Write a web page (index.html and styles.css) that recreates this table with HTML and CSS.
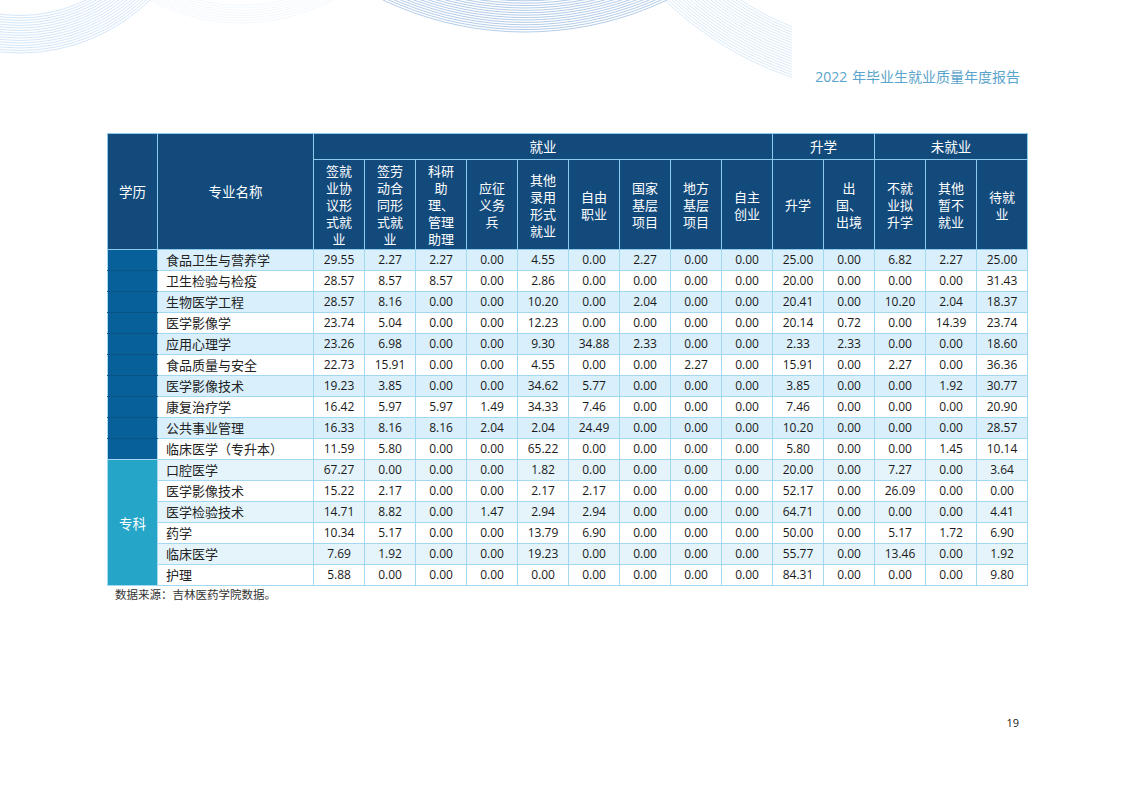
FILE: index.html
```html
<!DOCTYPE html>
<html lang="zh-CN">
<head>
<meta charset="utf-8">
<title>2022 年毕业生就业质量年度报告</title>
<link rel="stylesheet" href="styles.css">
</head>
<body>
<div class="page">
  <svg class="deco" width="1122" height="100" viewBox="0 0 1122 100" aria-hidden="true">
    <defs>
      <clipPath id="clipD"><rect x="0" y="0" width="792" height="100"/></clipPath>
    </defs>
    <g class="bA" fill="none">
      <circle cx="20" cy="-133" r="186"/><circle cx="20" cy="-133" r="183.5"/><circle cx="20" cy="-133" r="181"/><circle cx="20" cy="-133" r="178.5"/>
      <circle cx="20" cy="-133" r="176"/><circle cx="20" cy="-133" r="173.5"/><circle cx="20" cy="-133" r="171"/><circle cx="20" cy="-133" r="168.5"/>
      <circle cx="20" cy="-133" r="166"/><circle cx="20" cy="-133" r="163.5"/><circle cx="20" cy="-133" r="161"/><circle cx="20" cy="-133" r="158.5"/>
      <circle cx="20" cy="-133" r="156"/><circle cx="20" cy="-133" r="153.5"/><circle cx="20" cy="-133" r="151"/><circle cx="20" cy="-133" r="148.5"/>
    </g>
    <g class="bB" fill="none">
      <circle cx="241" cy="-170.5" r="193.5"/><circle cx="241" cy="-170.5" r="191"/><circle cx="241" cy="-170.5" r="188.5"/><circle cx="241" cy="-170.5" r="186"/>
      <circle cx="241" cy="-170.5" r="183.5"/><circle cx="241" cy="-170.5" r="181"/><circle cx="241" cy="-170.5" r="178.5"/><circle cx="241" cy="-170.5" r="176"/>
    </g>
    <g class="bC" fill="none">
      <circle cx="525" cy="-299" r="331"/><circle cx="525" cy="-299" r="328.6"/><circle cx="525" cy="-299" r="326.2"/><circle cx="525" cy="-299" r="323.8"/>
      <circle cx="525" cy="-299" r="321.4"/><circle cx="525" cy="-299" r="319"/><circle cx="525" cy="-299" r="316.6"/><circle cx="525" cy="-299" r="314.2"/>
      <circle cx="525" cy="-299" r="311.8"/><circle cx="525" cy="-299" r="309.4"/><circle cx="525" cy="-299" r="307"/><circle cx="525" cy="-299" r="304.6"/>
      <circle cx="525" cy="-299" r="302.2"/><circle cx="525" cy="-299" r="299.8"/>
    </g>
    <g class="bD" fill="none" clip-path="url(#clipD)">
      <circle cx="900" cy="-244" r="339"/><circle cx="900" cy="-244" r="336.5"/><circle cx="900" cy="-244" r="334"/><circle cx="900" cy="-244" r="331.5"/>
      <circle cx="900" cy="-244" r="329"/><circle cx="900" cy="-244" r="326.5"/><circle cx="900" cy="-244" r="324"/><circle cx="900" cy="-244" r="321.5"/>
      <circle cx="900" cy="-244" r="319"/><circle cx="900" cy="-244" r="316.5"/><circle cx="900" cy="-244" r="314"/><circle cx="900" cy="-244" r="311.5"/>
      <circle cx="900" cy="-244" r="309"/><circle cx="900" cy="-244" r="306.5"/><circle cx="900" cy="-244" r="304"/><circle cx="900" cy="-244" r="301.5"/>
      <circle cx="900" cy="-244" r="299"/><circle cx="900" cy="-244" r="296.5"/><circle cx="900" cy="-244" r="294"/><circle cx="900" cy="-244" r="291.5"/>
    </g>
  </svg>

  <header class="report-title">2022 年毕业生就业质量年度报告</header>

  <main class="content">
    <table class="data">
      <colgroup>
        <col class="c-edu"><col class="c-name">
        <col class="c-num"><col class="c-num"><col class="c-num"><col class="c-num"><col class="c-num"><col class="c-num"><col class="c-num">
        <col class="c-num"><col class="c-num"><col class="c-num"><col class="c-num"><col class="c-num"><col class="c-num"><col class="c-num">
      </colgroup>
      <thead>
        <tr class="h1">
          <th rowspan="2">学历</th>
          <th rowspan="2">专业名称</th>
          <th colspan="9">就业</th>
          <th colspan="2">升学</th>
          <th colspan="3">未就业</th>
        </tr>
        <tr class="h2">
          <th>签就业协议形式就业</th>
          <th>签劳动合同形式就业</th>
          <th>科研助理、管理助理</th>
          <th>应征义务兵</th>
          <th>其他录用形式就业</th>
          <th>自由职业</th>
          <th>国家基层项目</th>
          <th>地方基层项目</th>
          <th>自主创业</th>
          <th>升学</th>
          <th>出国、出境</th>
          <th>不就业拟升学</th>
          <th>其他暂不就业</th>
          <th>待就业</th>
        </tr>
      </thead>
      <tbody>
        <tr class="bk-row alt"><td class="bk"></td><td class="name">食品卫生与营养学</td><td>29.55</td><td>2.27</td><td>2.27</td><td>0.00</td><td>4.55</td><td>0.00</td><td>2.27</td><td>0.00</td><td>0.00</td><td>25.00</td><td>0.00</td><td>6.82</td><td>2.27</td><td>25.00</td></tr>
        <tr class="bk-row"><td class="bk"></td><td class="name">卫生检验与检疫</td><td>28.57</td><td>8.57</td><td>8.57</td><td>0.00</td><td>2.86</td><td>0.00</td><td>0.00</td><td>0.00</td><td>0.00</td><td>20.00</td><td>0.00</td><td>0.00</td><td>0.00</td><td>31.43</td></tr>
        <tr class="bk-row alt"><td class="bk"></td><td class="name">生物医学工程</td><td>28.57</td><td>8.16</td><td>0.00</td><td>0.00</td><td>10.20</td><td>0.00</td><td>2.04</td><td>0.00</td><td>0.00</td><td>20.41</td><td>0.00</td><td>10.20</td><td>2.04</td><td>18.37</td></tr>
        <tr class="bk-row"><td class="bk"></td><td class="name">医学影像学</td><td>23.74</td><td>5.04</td><td>0.00</td><td>0.00</td><td>12.23</td><td>0.00</td><td>0.00</td><td>0.00</td><td>0.00</td><td>20.14</td><td>0.72</td><td>0.00</td><td>14.39</td><td>23.74</td></tr>
        <tr class="bk-row alt"><td class="bk"></td><td class="name">应用心理学</td><td>23.26</td><td>6.98</td><td>0.00</td><td>0.00</td><td>9.30</td><td>34.88</td><td>2.33</td><td>0.00</td><td>0.00</td><td>2.33</td><td>2.33</td><td>0.00</td><td>0.00</td><td>18.60</td></tr>
        <tr class="bk-row"><td class="bk"></td><td class="name">食品质量与安全</td><td>22.73</td><td>15.91</td><td>0.00</td><td>0.00</td><td>4.55</td><td>0.00</td><td>0.00</td><td>2.27</td><td>0.00</td><td>15.91</td><td>0.00</td><td>2.27</td><td>0.00</td><td>36.36</td></tr>
        <tr class="bk-row alt"><td class="bk"></td><td class="name">医学影像技术</td><td>19.23</td><td>3.85</td><td>0.00</td><td>0.00</td><td>34.62</td><td>5.77</td><td>0.00</td><td>0.00</td><td>0.00</td><td>3.85</td><td>0.00</td><td>0.00</td><td>1.92</td><td>30.77</td></tr>
        <tr class="bk-row"><td class="bk"></td><td class="name">康复治疗学</td><td>16.42</td><td>5.97</td><td>5.97</td><td>1.49</td><td>34.33</td><td>7.46</td><td>0.00</td><td>0.00</td><td>0.00</td><td>7.46</td><td>0.00</td><td>0.00</td><td>0.00</td><td>20.90</td></tr>
        <tr class="bk-row alt"><td class="bk"></td><td class="name">公共事业管理</td><td>16.33</td><td>8.16</td><td>8.16</td><td>2.04</td><td>2.04</td><td>24.49</td><td>0.00</td><td>0.00</td><td>0.00</td><td>10.20</td><td>0.00</td><td>0.00</td><td>0.00</td><td>28.57</td></tr>
        <tr class="bk-row"><td class="bk bk-last"></td><td class="name">临床医学（专升本）</td><td>11.59</td><td>5.80</td><td>0.00</td><td>0.00</td><td>65.22</td><td>0.00</td><td>0.00</td><td>0.00</td><td>0.00</td><td>5.80</td><td>0.00</td><td>0.00</td><td>1.45</td><td>10.14</td></tr>
        <tr class="zk-row alt"><td class="zk" rowspan="6">专科</td><td class="name">口腔医学</td><td>67.27</td><td>0.00</td><td>0.00</td><td>0.00</td><td>1.82</td><td>0.00</td><td>0.00</td><td>0.00</td><td>0.00</td><td>20.00</td><td>0.00</td><td>7.27</td><td>0.00</td><td>3.64</td></tr>
        <tr class="zk-row"><td class="name">医学影像技术</td><td>15.22</td><td>2.17</td><td>0.00</td><td>0.00</td><td>2.17</td><td>2.17</td><td>0.00</td><td>0.00</td><td>0.00</td><td>52.17</td><td>0.00</td><td>26.09</td><td>0.00</td><td>0.00</td></tr>
        <tr class="zk-row alt"><td class="name">医学检验技术</td><td>14.71</td><td>8.82</td><td>0.00</td><td>1.47</td><td>2.94</td><td>2.94</td><td>0.00</td><td>0.00</td><td>0.00</td><td>64.71</td><td>0.00</td><td>0.00</td><td>0.00</td><td>4.41</td></tr>
        <tr class="zk-row"><td class="name">药学</td><td>10.34</td><td>5.17</td><td>0.00</td><td>0.00</td><td>13.79</td><td>6.90</td><td>0.00</td><td>0.00</td><td>0.00</td><td>50.00</td><td>0.00</td><td>5.17</td><td>1.72</td><td>6.90</td></tr>
        <tr class="zk-row alt"><td class="name">临床医学</td><td>7.69</td><td>1.92</td><td>0.00</td><td>0.00</td><td>19.23</td><td>0.00</td><td>0.00</td><td>0.00</td><td>0.00</td><td>55.77</td><td>0.00</td><td>13.46</td><td>0.00</td><td>1.92</td></tr>
        <tr class="zk-row"><td class="name">护理</td><td>5.88</td><td>0.00</td><td>0.00</td><td>0.00</td><td>0.00</td><td>0.00</td><td>0.00</td><td>0.00</td><td>0.00</td><td>84.31</td><td>0.00</td><td>0.00</td><td>0.00</td><td>9.80</td></tr>
      </tbody>
    </table>
    <p class="source">数据来源：吉林医药学院数据。</p>
  </main>

  <footer class="page-no">19</footer>
</div>
</body>
</html>
```

FILE: styles.css
```css
* { box-sizing: border-box; }

html, body {
  margin: 0;
  padding: 0;
  background: #ffffff;
}

body {
  font-family: "Open Sans", "Noto Sans CJK SC", sans-serif;
  color: #1a1a1a;
}

.page {
  position: relative;
  width: 1122px;
  height: 793px;
  overflow: hidden;
  background: #ffffff;
}

/* decorative line bundles along the top edge */
.deco {
  position: absolute;
  left: 0;
  top: 0;
  pointer-events: none;
}
.bA { stroke: #b5d5f5; stroke-width: 0.6; }
.bB { stroke: #e6f0fa; stroke-width: 0.5; }
.bC { stroke: #7fa9da; stroke-width: 0.6; }
.bD { stroke: #c0dbf5; stroke-width: 0.6; }

.report-title {
  position: relative;
  padding: 67px 102px 0 0;
  text-align: right;
  font-family: "Open Sans", "Noto Sans CJK SC", sans-serif;
  font-size: 14px;
  line-height: 20px;
  color: #5aa3ca;
  word-spacing: 1px;
}

.content {
  padding: 46px 0 0 107px;
}

.data {
  border-collapse: collapse;
  table-layout: fixed;
  width: 921px;
}

.c-edu { width: 50px; }
.c-name { width: 156px; }
.c-num { width: 51px; }

.data th {
  background: #124a7c;
  color: #ffffff;
  font-family: "Noto Sans CJK SC", sans-serif;
  font-weight: normal;
  font-size: 13.5px;
  border: 1px solid #8ccbed;
  padding: 0;
  text-align: center;
  vertical-align: middle;
}

.h1 th {
  height: 26px;
  line-height: 25px;
}

.h2 th {
  height: 90px;
  font-size: 13px;
  line-height: 17px;
  padding: 0 8px;
}

.data td {
  border: 1px solid #a3d8f2;
  padding: 0;
  height: 21px;
  line-height: 20px;
  text-align: center;
  font-size: 12px;
  color: #1a1a1a;
  background: #ffffff;
  white-space: nowrap;
}

.data td.name {
  text-align: left;
  padding-left: 8px;
  font-family: "Noto Sans CJK SC", sans-serif;
  font-size: 13px;
  color: #222222;
}

.bk-row.alt td { background: #d9effb; }
.zk-row.alt td { background: #e4f4fa; }

.data td.bk {
  background: #08609a;
  border-top-color: #0b5387;
  border-bottom-color: #0b5387;
  border-left-color: #a3d8f2;
  border-right-color: #a3d8f2;
}
.data td.bk.bk-last { border-bottom-color: #a3d8f2; }

.data td.zk {
  background: #25a6c8;
  color: #ffffff;
  font-family: "Noto Sans CJK SC", sans-serif;
  font-size: 13.5px;
}

.source {
  margin: 0;
  padding-left: 8px;
  font-family: "Noto Sans CJK SC", sans-serif;
  font-size: 11.5px;
  line-height: 16px;
  color: #333333;
}

.page-no {
  padding: 113px 103px 0 0;
  text-align: right;
  font-family: "Open Sans", sans-serif;
  font-size: 11px;
  line-height: 16px;
  color: #222222;
}
```
